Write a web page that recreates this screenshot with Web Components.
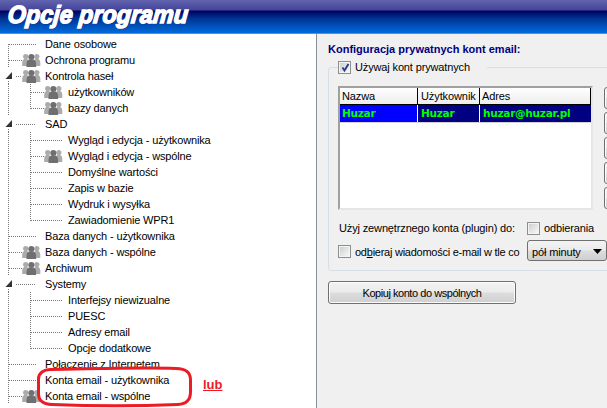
<!DOCTYPE html>
<html lang="pl">
<head>
<meta charset="utf-8">
<title>Opcje programu</title>
<style>
  html, body { margin: 0; height: 100%; }
  body { width: 607px; height: 408px; overflow: hidden; font: 11px "Liberation Sans", Arial, sans-serif; color: #000; }
</style>
</head>
<body>
<app-shell>
  <app-header slot="header">Opcje programu</app-header>
  <options-tree slot="tree">
    <tree-row hook="root" icon="0" text="Dane osobowe" rail="down"></tree-row>
    <tree-row icon="1" text="Ochrona programu"></tree-row>
    <tree-row expander icon="1" text="Kontrola haseł"></tree-row>
    <tree-row level="2" icon="1" text="użytkowników"></tree-row>
    <tree-row level="2" icon="1" last text="bazy danych"></tree-row>
    <tree-row expander text="SAD"></tree-row>
    <tree-row level="2" text="Wygląd i edycja - użytkownika"></tree-row>
    <tree-row level="2" icon="1" text="Wygląd i edycja - wspólne"></tree-row>
    <tree-row level="2" text="Domyślne wartości"></tree-row>
    <tree-row level="2" text="Zapis w bazie"></tree-row>
    <tree-row level="2" text="Wydruk i wysyłka"></tree-row>
    <tree-row level="2" last text="Zawiadomienie WPR1"></tree-row>
    <tree-row text="Baza danych - użytkownika"></tree-row>
    <tree-row icon="1" text="Baza danych - wspólne"></tree-row>
    <tree-row icon="1" text="Archiwum"></tree-row>
    <tree-row expander text="Systemy"></tree-row>
    <tree-row level="2" text="Interfejsy niewizualne"></tree-row>
    <tree-row level="2" text="PUESC"></tree-row>
    <tree-row level="2" text="Adresy email"></tree-row>
    <tree-row level="2" last text="Opcje dodatkowe"></tree-row>
    <tree-row text="Połączenie z Internetem"></tree-row>
    <tree-row text="Konta email - użytkownika"></tree-row>
    <tree-row icon="1" text="Konta email - wspólne"></tree-row>
  </options-tree>
  <red-mark slot="tree"></red-mark>
  <email-panel slot="panel"></email-panel>
</app-shell>

<script>
function define(tag, html, init) {
  customElements.define(tag, class extends HTMLElement {
    connectedCallback() {
      if (this.shadowRoot) return;
      const shadow = this.attachShadow({ mode: "open" });
      shadow.innerHTML = typeof html === "function" ? html(this) : html;
      if (init) init(this, shadow);
    }
  });
}

define("app-shell", `
  <style>
    :host { display: flex; flex-direction: column; width: 607px; height: 408px; overflow: hidden; background: #f0f0f0; }
    .main { flex: 1; display: flex; min-height: 0; }
    .left { position: relative; width: 316px; flex: none; background: #fff; border-right: 1px solid #87909a; overflow: hidden; }
    .right { flex: 1; min-width: 0; overflow: hidden; }
  </style>
  <slot name="header"></slot>
  <div class="main">
    <div class="left"><slot name="tree"></slot></div>
    <div class="right"><slot name="panel"></slot></div>
  </div>`);

define("app-header", `
  <style>
    :host { display: block; height: 33px; border-bottom: 1px solid #7f8790; overflow: hidden;
      background: linear-gradient(#6264ae 0, #44459a 10px, #00005f 11px, #00308f 18px, #0068d8 32px); }
    span { display: inline-block; margin: 3px 0 0 9px; transform-origin: 0 0; transform: scale(1.06, 1.12) skewX(-5deg);
      font: italic bold 22px/22px "Liberation Sans", Arial, sans-serif; color: #fff; white-space: nowrap;
      -webkit-text-stroke: 1.3px #fff; text-shadow: 1px 1px 0 #0a1a78; }
  </style>
  <span><slot></slot></span>`);

define("options-tree", `
  <style>:host { display: block; padding-top: 2px; }</style>
  <slot></slot>`);

// grupa ludzikow z drzewa, x = lewa krawedz
function peopleIcon(x) {
  const side = (cx, color) => `<g fill="${color}"><circle cx="${cx}" cy="4.5" r="2.6"/><path d="M${cx - 3.5} 14v-3.5q0-3 2-3.5h3q2 .5 2 3.5V14z"/></g>`;
  return `<g transform="translate(${x} 0)" shape-rendering="geometricPrecision">
    ${side(3.7, "#ababab")}${side(14.8, "#ababab")}
    <g fill="#6f6f6f"><circle cx="9.3" cy="5" r="3"/><path d="M4.5 15v-3.5q0-3 2.5-4h4.6q2.500 1 2.500 4V15z"/></g>
  </g>`;
}

define("tree-row", (el) => {
  const level = +(el.getAttribute("level") || 1);
  const hasIcon = el.getAttribute("icon") === "1";
  const expander = el.hasAttribute("expander");
  const last = el.hasAttribute("last");
  const w = level === 2 ? 67 : 44;
  let g = "";
  // linia glowna pnia
  if (expander) g += `<path d="M8.500 13V16" class="d"/><path d="M12 4.500L12 11.500L5.500 11.500z" fill="#333" transform="translate(0 -.5)"/>`;
  else if (level === 1) g += `<path d="M8.500 ${el.hasAttribute("hook") ? 8 : 0}V16" class="d"/>`;
  else g += `<path d="M8.500 0V16" class="d"/>`;
  if (level === 1) {
    g += `<path d="M${expander ? 16 : 9} 8.500H${hasIcon ? 22 : 36}" class="d"/>`;
    if (hasIcon) g += peopleIcon(22);
  } else {
    g += `<path d="M30.500 0V${last ? 8.5 : 16}" class="d"/>`;
    g += `<path d="M31 8.500H${hasIcon ? 44 : 62}" class="d"/>`;
    if (hasIcon) g += peopleIcon(44);
  }
  return `
  <style>
    :host { display: flex; align-items: center; height: 16px; white-space: nowrap; }
    svg { flex: none; display: block; }
    .d { fill: none; stroke: #7a7a7a; stroke-width: 1; stroke-dasharray: 1 1; shape-rendering: crispEdges; }
    span { margin-left: 1px; font: 11px/16px "Liberation Sans", Arial, sans-serif; letter-spacing: -.14px; }
  </style>
  <svg width="${w}" height="16" viewBox="0 0 ${w} 16">${g}</svg>
  <span>${el.getAttribute("text")}</span>`;
});

define("red-mark", `
  <style>
    :host { position: absolute; left: 0; top: 0; width: 316px; height: 374px; pointer-events: none; }
    svg { position: absolute; left: 0; top: 0; }
    a { position: absolute; left: 203px; top: 343px; font: bold 13px/16px "Liberation Sans", Arial, sans-serif; color: #ed1c24; text-decoration: underline; }
  </style>
  <svg width="316" height="374" viewBox="0 0 316 374" fill="none">
    <path d="M50 335.500C44 335.500 38.500 339 38.500 345V360C38.500 366 43 370 52 370.500C90 372 140 372 178 370.500C187 370 190.500 365 190.500 358V346C190.500 338 186 335 176 334.500C140 333 90 335 50 335.500z" stroke="#ed1c24" stroke-width="3"/>
  </svg>
  <a>lub</a>`);

define("win-check", (el) => `
  <style>
    :host { display: inline-flex; align-items: center; gap: 4px; white-space: nowrap; font: 11px/16px "Liberation Sans", Arial, sans-serif; letter-spacing: -.14px; }
    i { flex: none; box-sizing: border-box; width: 13px; height: 13px; border: 1px solid #8e8f8f; box-shadow: inset 0 0 0 1px #f4f4f4; background: linear-gradient(135deg, #c9cbce, #eceded 70%, #f8f8f8); display: block; }
    svg { display: block; margin: 0 0 0 .5px; }
  </style>
  <i>${el.hasAttribute("checked") ? `<svg width="11" height="11" viewBox="0 0 11 11"><path d="M2.500 5.500L4.500 8.500L8.500 2" fill="none" stroke="#2c3f8f" stroke-width="2"/></svg>` : ""}</i>
  <span><slot></slot></span>`);

define("win-button", `
  <style>
    :host { display: flex; align-items: center; justify-content: center; box-sizing: border-box; border: 1px solid #707070; border-radius: 3px;
      box-shadow: inset 0 0 0 1px #fbfbfb;
      background: linear-gradient(#f3f3f3, #ebebeb 48%, #dddddd 52%, #cfcfcf);
      font: 11px/16px "Liberation Sans", Arial, sans-serif; letter-spacing: -.45px; }
  </style>
  <slot></slot>`);

define("win-select", `
  <style>
    :host { display: flex; align-items: center; justify-content: space-between; box-sizing: border-box; width: 80px; height: 21px; padding: 2px 4px 0;
      border: 1px solid #707070; border-radius: 3px; background: linear-gradient(#f3f3f3, #ebebeb 48%, #dddddd 52%, #cfcfcf);
      font: 11px/16px "Liberation Sans", Arial, sans-serif; letter-spacing: -.14px; }
    svg { display: block; }
  </style>
  <slot></slot>
  <svg width="9" height="5" viewBox="0 0 9 5"><path d="M0 0H9L4.500 5z" fill="#000"/></svg>`);

define("accounts-list", `
  <style>
    :host { display: block; box-sizing: border-box; width: 255px; height: 124px; flex: none; background: #fff;
      border: 2px solid; border-color: #a0a0a0 #e6e6e6 #e6e6e6 #a0a0a0; }
    .head, .row { display: grid; grid-template-columns: 78px 62px 1fr; }
    .head div { box-sizing: border-box; height: 17px; padding-left: 2px; border-right: 1px solid #000; border-bottom: 1px solid #000;
      background: linear-gradient(#fff, #ededed); font: 11px/16px "Liberation Sans", Arial, sans-serif; white-space: nowrap; }
    .head div:nth-child(2) { padding-left: 3px; letter-spacing: -.1px; }
    .row { border-bottom: 1px solid #d4d4d4; }
    .row div { box-sizing: border-box; height: 17px; padding-left: 3px; margin-right: 1px; background: #000080; color: #0f0;
      font: bold 10.500px/17px "DejaVu Sans", sans-serif; letter-spacing: -.25px; white-space: nowrap; }
    .row div:first-child { background: #00f; padding-left: 2px; }
    .row div:last-child { margin-right: 0; }
  </style>
  <div class="head"><div>Nazwa</div><div>Użytkownik</div><div>Adres</div></div>
  <div class="row"><div>Huzar</div><div>Huzar</div><div>huzar@huzar.pl</div></div>`);

define("email-panel", `
  <style>
    :host { display: block; padding: 8px 0 0 11px; font: 11px/16px "Liberation Sans", Arial, sans-serif; letter-spacing: -.14px; }
    h2 { margin: 0; font: bold 11px/14px "Liberation Sans", Arial, sans-serif; letter-spacing: 0; color: #000080; white-space: nowrap; }
    fieldset { box-sizing: border-box; width: 310px; height: 212px; margin: 3px 0 0; padding: 0 0 0 9px; border: 1px solid #d5dfe5; border-radius: 3px; }
    legend { padding: 0 17px 0 0; margin-left: 0; height: 16px; }
    .list { display: flex; gap: 11px; margin-top: 11px; }
    .btns { display: flex; flex-direction: column; gap: 3px; margin-top: 1px; flex: none; }
    .btns win-button { width: 40px; height: 22px; }
    .r1 { display: flex; align-items: center; height: 16px; margin-top: 10px; }
    .r2 { display: flex; align-items: center; height: 21px; margin-top: 4px; }
    .r1 span { width: 189px; flex: none; padding-left: 1px; box-sizing: border-box; white-space: nowrap; }
    .r2 win-check { width: 189px; flex: none; margin-top: 2px; letter-spacing: -.25px; }
    u { text-decoration: underline; }
    .copy { display: flex; width: 188px; height: 23px; margin-top: 10px; }
    .copy win-button { flex: 1; }
  </style>
  <h2>Konfiguracja prywatnych kont email:</h2>
  <fieldset>
    <legend><win-check checked>Używaj kont prywatnych</win-check></legend>
    <div class="list">
      <accounts-list></accounts-list>
      <div class="btns"><win-button></win-button><win-button></win-button><win-button></win-button><win-button></win-button><win-button></win-button></div>
    </div>
    <div class="r1"><span>Użyj zewnętrznego konta (plugin) do:</span><win-check>odbierania</win-check></div>
    <div class="r2"><win-check>od<u>b</u>ieraj wiadomości e-mail w tle co</win-check><win-select>pół minuty</win-select></div>
  </fieldset>
  <div class="copy"><win-button>Kopiuj konto do wspólnych</win-button></div>`);
</script>
</body>
</html>
